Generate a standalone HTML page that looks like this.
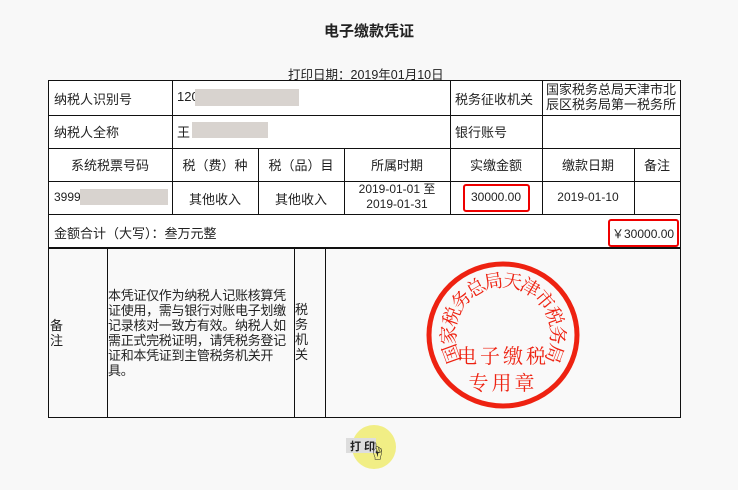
<!DOCTYPE html>
<html><head><meta charset="utf-8"><style>
body{margin:0;width:738px;height:490px;background:#f8f8f8;font-family:"Liberation Sans","Noto Sans CJK SC",sans-serif;color:#222;position:relative;overflow:hidden}
.a{position:absolute}
.t{font-size:13px;white-space:nowrap}
.l{position:absolute;background:#111}
.g{position:absolute;background:#d8d3cf}
.r{position:absolute;border:2px solid #e00;border-radius:3px}
</style></head><body>
<div class="a" style="left:0;top:20px;width:738px;text-align:center;font-size:15px;font-weight:bold">电子缴款凭证</div>
<div class="a t" style="left:288px;top:64px;font-size:12.5px">打印日期：2019年01月10日</div>
<div class="a" style="left:48px;top:80px;width:633px;height:338px;background:#fff"></div>
<div class="a" style="left:48px;top:248px;width:633px;height:170px;background:#f9f9f9"></div>
<div class="l" style="left:48px;top:80px;width:633px;height:1px"></div>
<div class="l" style="left:48px;top:115px;width:633px;height:1px"></div>
<div class="l" style="left:48px;top:148px;width:633px;height:1px"></div>
<div class="l" style="left:48px;top:181px;width:633px;height:1px"></div>
<div class="l" style="left:48px;top:214px;width:633px;height:1px"></div>
<div class="l" style="left:48px;top:247px;width:633px;height:2px"></div>
<div class="l" style="left:48px;top:417px;width:633px;height:1px"></div>
<div class="l" style="left:48px;top:80px;width:1px;height:338px"></div>
<div class="l" style="left:680px;top:80px;width:1px;height:338px"></div>
<div class="l" style="left:172px;top:80px;width:1px;height:134px"></div>
<div class="l" style="left:450px;top:80px;width:1px;height:134px"></div>
<div class="l" style="left:542px;top:80px;width:1px;height:134px"></div>
<div class="l" style="left:258px;top:148px;width:1px;height:66px"></div>
<div class="l" style="left:344px;top:148px;width:1px;height:66px"></div>
<div class="l" style="left:634px;top:148px;width:1px;height:66px"></div>
<div class="l" style="left:107px;top:248px;width:1px;height:170px"></div>
<div class="l" style="left:294px;top:248px;width:1px;height:170px"></div>
<div class="l" style="left:325px;top:248px;width:1px;height:170px"></div>
<div class="a t" style="left:54px;top:89px">纳税人识别号</div>
<div class="a t" style="left:177px;top:89px">120</div>
<div class="g" style="left:195px;top:89px;width:104px;height:17px"></div>
<div class="a t" style="left:455px;top:89px">税务征收机关</div>
<div class="a t" style="left:546px;top:82px;line-height:15px">国家税务总局天津市北<br>辰区税务局第一税务所</div>
<div class="a t" style="left:54px;top:122px">纳税人全称</div>
<div class="a t" style="left:177px;top:122px">王</div>
<div class="g" style="left:192px;top:122px;width:76px;height:16px"></div>
<div class="a t" style="left:455px;top:122px">银行账号</div>
<div class="a t" style="left:48px;top:155px;width:124px;text-align:center">系统税票号码</div>
<div class="a t" style="left:172px;top:155px;width:86px;text-align:center">税（费）种</div>
<div class="a t" style="left:258px;top:155px;width:86px;text-align:center">税（品）目</div>
<div class="a t" style="left:344px;top:155px;width:106px;text-align:center">所属时期</div>
<div class="a t" style="left:450px;top:155px;width:92px;text-align:center">实缴金额</div>
<div class="a t" style="left:542px;top:155px;width:92px;text-align:center">缴款日期</div>
<div class="a t" style="left:634px;top:155px;width:46px;text-align:center">备注</div>
<div class="a t" style="left:54px;top:190px;font-size:12px">3999</div>
<div class="g" style="left:80px;top:189px;width:88px;height:16px"></div>
<div class="a t" style="left:172px;top:189px;width:86px;text-align:center">其他收入</div>
<div class="a t" style="left:258px;top:189px;width:86px;text-align:center">其他收入</div>
<div class="a t" style="left:344px;top:182px;width:106px;text-align:center;font-size:12px;line-height:15px">2019-01-01 至<br>2019-01-31</div>
<div class="r" style="left:463px;top:184px;width:63px;height:24px"></div>
<div class="a t" style="left:450px;top:190px;width:92px;text-align:center;font-size:12px">30000.00</div>
<div class="a t" style="left:542px;top:190px;width:92px;text-align:center;font-size:12px">2019-01-10</div>
<div class="a t" style="left:54px;top:223px">金额合计（大写）：叁万元整</div>
<div class="r" style="left:608px;top:219px;width:67px;height:24px"></div>
<div class="a t" style="left:612px;top:225px;font-size:12px">￥30000.00</div>
<div class="a t" style="left:50px;top:318px;line-height:15px">备<br>注</div>
<div class="a" style="left:108px;top:288px;width:186px;font-size:13px;line-height:15px;letter-spacing:-0.3px">本凭证仅作为纳税人记账核算凭证使用，需与银行对账电子划缴记录核对一致方有效。纳税人如需正式完税证明，请凭税务登记证和本凭证到主管税务机关开具。</div>
<div class="a t" style="left:295px;top:302px;line-height:15px">税<br>务<br>机<br>关</div>
<svg class="a" style="left:420px;top:255px" width="166" height="160" viewBox="0 0 166 160">
<ellipse cx="83" cy="80" rx="74" ry="71" fill="none" stroke="#e21" stroke-width="5"/>
<g font-size="19" fill="#e21" font-family="Noto Serif CJK SC,serif" text-anchor="middle">
<text x="83" y="32" transform="rotate(-110 83 80)">国</text>
<text x="83" y="32" transform="rotate(-90 83 80)">家</text>
<text x="83" y="32" transform="rotate(-70 83 80)">税</text>
<text x="83" y="32" transform="rotate(-50 83 80)">务</text>
<text x="83" y="32" transform="rotate(-30 83 80)">总</text>
<text x="83" y="32" transform="rotate(-10 83 80)">局</text>
<text x="83" y="32" transform="rotate(10 83 80)">天</text>
<text x="83" y="32" transform="rotate(30 83 80)">津</text>
<text x="83" y="32" transform="rotate(50 83 80)">市</text>
<text x="83" y="32" transform="rotate(70 83 80)">税</text>
<text x="83" y="32" transform="rotate(90 83 80)">务</text>
<text x="83" y="32" transform="rotate(110 83 80)">局</text>
</g>
<text x="83" y="108" text-anchor="middle" font-size="20" fill="#e21" font-family="Noto Serif CJK SC,serif" letter-spacing="3">电子缴税</text>
<text x="83" y="135" text-anchor="middle" font-size="20" fill="#e21" font-family="Noto Serif CJK SC,serif" letter-spacing="3">专用章</text>
</svg>
<div class="a" style="left:352px;top:425px;width:44px;height:44px;border-radius:50%;background:#efec78;opacity:.9"></div>
<div class="a" style="left:346px;top:438px;width:30px;height:15px;background:#ddd"></div>
<div class="a t" style="left:350px;top:438px;font-size:11px;font-weight:bold">打 印</div>
<div class="a" style="left:368px;top:438px;font-size:18px">☝</div>
</body></html>
